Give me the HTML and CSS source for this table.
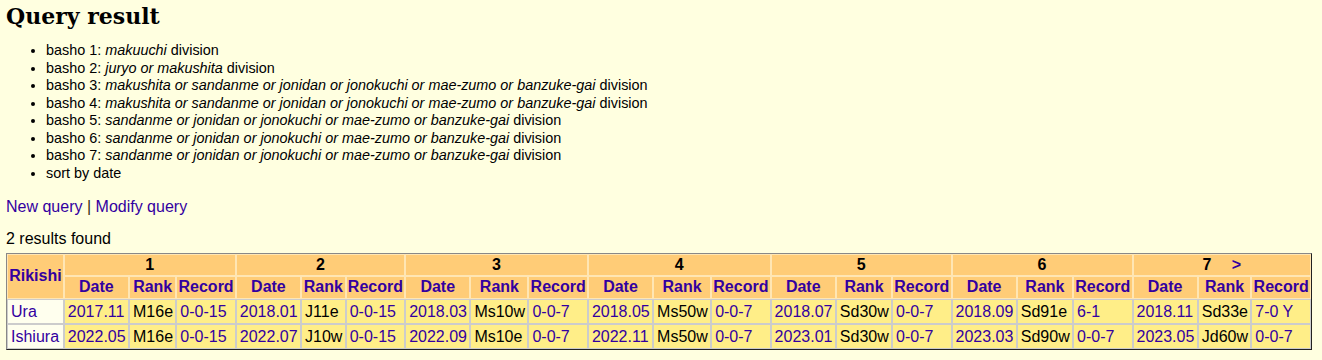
FILE: index.html
```html
<!DOCTYPE html>
<html>
<head>
<meta charset="utf-8">
<title>Query result</title>
<link rel="stylesheet" href="styles.css">
</head>
<body>
<h1 class="title">Query result</h1>
<ul class="criteria">
<li>basho 1: <i>makuuchi</i> division</li>
<li>basho 2: <i>juryo or makushita</i> division</li>
<li>basho 3: <i>makushita or sandanme or jonidan or jonokuchi or mae-zumo or banzuke-gai</i> division</li>
<li>basho 4: <i>makushita or sandanme or jonidan or jonokuchi or mae-zumo or banzuke-gai</i> division</li>
<li>basho 5: <i>sandanme or jonidan or jonokuchi or mae-zumo or banzuke-gai</i> division</li>
<li>basho 6: <i>sandanme or jonidan or jonokuchi or mae-zumo or banzuke-gai</i> division</li>
<li>basho 7: <i>sandanme or jonidan or jonokuchi or mae-zumo or banzuke-gai</i> division</li>
<li>sort by date</li>
</ul>
<p class="links"><a href="#">New query</a> <span class="sep">|</span> <a href="#">Modify query</a></p>
<p class="count">2 results found</p>
<table class="results">
<thead>
<tr>
<th rowspan="2" class="rk">Rikishi</th>
<th colspan="3" class="num">1</th>
<th colspan="3" class="num">2</th>
<th colspan="3" class="num">3</th>
<th colspan="3" class="num">4</th>
<th colspan="3" class="num">5</th>
<th colspan="3" class="num">6</th>
<th colspan="3" class="num">7 <a href="#" class="next">&gt;</a></th>
</tr>
<tr>
<th>Date</th><th>Rank</th><th>Record</th>
<th>Date</th><th>Rank</th><th>Record</th>
<th>Date</th><th>Rank</th><th>Record</th>
<th>Date</th><th>Rank</th><th>Record</th>
<th>Date</th><th>Rank</th><th>Record</th>
<th>Date</th><th>Rank</th><th>Record</th>
<th>Date</th><th>Rank</th><th>Record</th>
</tr>
</thead>
<tbody>
<tr>
<td class="name"><a href="#">Ura</a></td>
<td><a href="#">2017.11</a></td><td>M16e</td><td><a href="#">0-0-15</a></td>
<td><a href="#">2018.01</a></td><td>J11e</td><td><a href="#">0-0-15</a></td>
<td><a href="#">2018.03</a></td><td>Ms10w</td><td><a href="#">0-0-7</a></td>
<td><a href="#">2018.05</a></td><td>Ms50w</td><td><a href="#">0-0-7</a></td>
<td><a href="#">2018.07</a></td><td>Sd30w</td><td><a href="#">0-0-7</a></td>
<td><a href="#">2018.09</a></td><td>Sd91e</td><td><a href="#">6-1</a></td>
<td><a href="#">2018.11</a></td><td>Sd33e</td><td><a href="#">7-0 Y</a></td>
</tr>
<tr>
<td class="name"><a href="#">Ishiura</a></td>
<td><a href="#">2022.05</a></td><td>M16e</td><td><a href="#">0-0-15</a></td>
<td><a href="#">2022.07</a></td><td>J10w</td><td><a href="#">0-0-15</a></td>
<td><a href="#">2022.09</a></td><td>Ms10e</td><td><a href="#">0-0-7</a></td>
<td><a href="#">2022.11</a></td><td>Ms50w</td><td><a href="#">0-0-7</a></td>
<td><a href="#">2023.01</a></td><td>Sd30w</td><td><a href="#">0-0-7</a></td>
<td><a href="#">2023.03</a></td><td>Sd90w</td><td><a href="#">0-0-7</a></td>
<td><a href="#">2023.05</a></td><td>Jd60w</td><td><a href="#">0-0-7</a></td>
</tr>
</tbody>
</table>
</body>
</html>
```

FILE: styles.css
```css
html {
  background: #ffffe0;
}
body {
  margin: 0 10px 0 6px;
  font-family: "Liberation Sans", Arial, sans-serif;
  font-size: 16px;
  color: #000;
  background: #ffffe0;
}
a {
  color: #3300a0;
  text-decoration: none;
}
.title {
  font-family: "DejaVu Serif", Georgia, serif;
  font-weight: bold;
  font-size: 22px;
  margin: 3px 0 0 0;
  line-height: normal;
}
.criteria {
  margin: 13px 0 0 0;
  padding-left: 40px;
  font-size: 14.4px;
  line-height: 17.5px;
}
.links {
  margin: 16px 0 0 0;
  line-height: 18.4px;
}
.sep {
  color: #3a2a10;
}
.count {
  margin: 14px 0 0 0;
  line-height: 18.4px;
}
.results {
  margin-top: 4px;
  width: 100%;
  border-collapse: separate;
  border-spacing: 0;
  border-style: solid;
  border-width: 1px;
  border-color: #888 #222 #222 #888;
  font-size: 16px;
}
.results th {
  background: #ffcc77;
  color: #3300a0;
  font-weight: bold;
  padding: 1px;
  border: 1px solid #ffe6b4;
  line-height: 18.4px;
  white-space: nowrap;
}
.results th.num {
  color: #000;
}
.results th .next {
  margin-left: 16px;
}
.results td {
  background: #ffee88;
  padding: 3px 2px 2px 3px;
  border: 1px solid #cccccc;
  line-height: 18.4px;
  white-space: nowrap;
  text-align: left;
}
.results td.name {
  background: #ffffee;
}
```
